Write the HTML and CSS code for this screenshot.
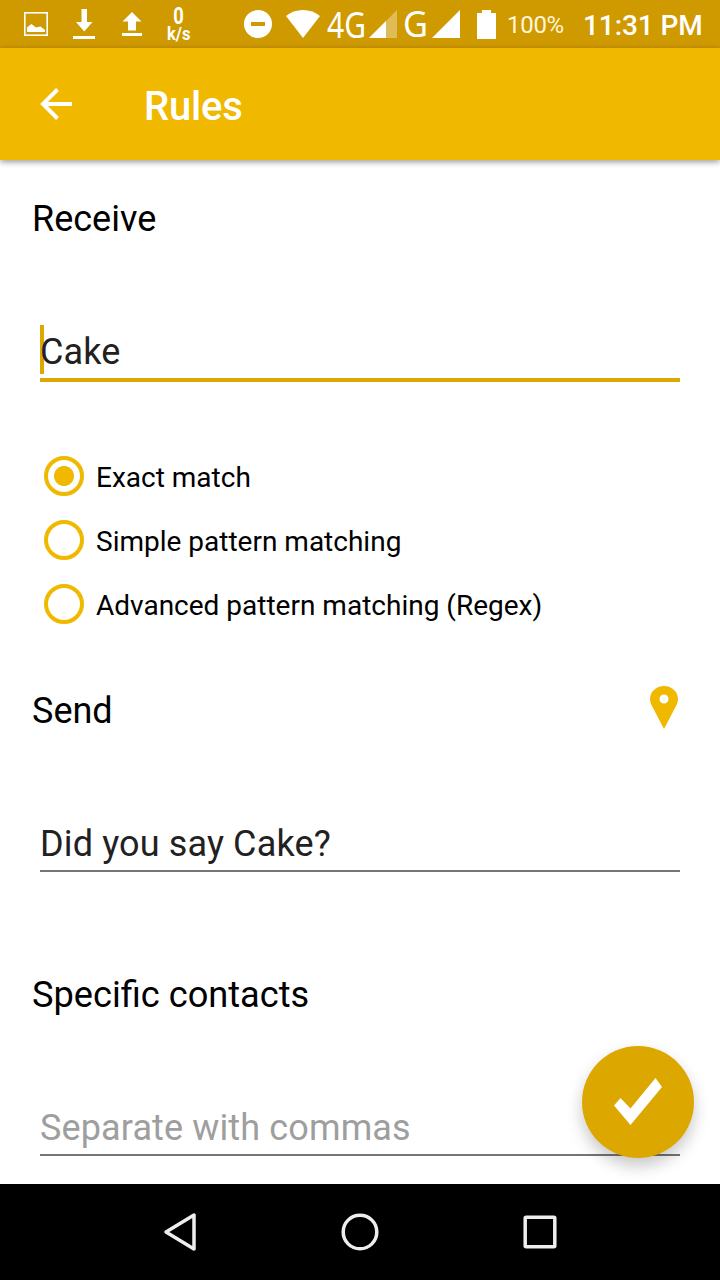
FILE: index.html
```html
<!DOCTYPE html>
<html lang="en">
<head>
    <meta charset="UTF-8">
    <meta name="viewport" content="width=device-width, initial-scale=1.0">
    <title>Rules</title>
    <link rel="stylesheet" href="styles.css">
</head>
<body>
    <div class="screen">
        <div class="status-bar">
            <div class="status-left">
                <svg width="24" height="24" viewBox="0 0 24 24">
                    <rect x="0.8" y="0.8" width="22.4" height="22.4" fill="none" stroke="#fff" stroke-width="1.6"/>
                    <path d="M3 20v-4.500l3-2.500 1.500-1 4.500 3.500 4.500-1 4.500 3.500v2z" fill="#fff"/>
                </svg>
                <svg class="download" width="22" height="30" viewBox="0 0 22 30">
                    <path d="M8.500 0h5.500v13h5.500L11.200 22.500 3 13h5.500zM0 27h22v3H0z" fill="#fff"/>
                </svg>
                <svg class="upload" width="20" height="24" viewBox="0 0 20 24">
                    <path d="M10 0l9.500 9.500H14V18.500H6V9.500H.5zM0 21h20v3H0z" fill="#fff"/>
                </svg>
                <div class="speed">
                    <span class="speed-value">0</span>
                    <span class="speed-unit">k/s</span>
                </div>
            </div>
            <div class="status-right">
                <svg width="28" height="28" viewBox="0 0 28 28">
                    <circle cx="14" cy="14" r="14" fill="#fff"/>
                    <path d="M7 12h14v4H7z" fill="#cf9900"/>
                </svg>
                <svg class="wifi" width="34" height="28" viewBox="0 0 34 28">
                    <path d="M17 28L0 6Q7 0 17 0t17 6z" fill="#fff"/>
                </svg>
                <svg class="network" width="38" height="34" viewBox="0 0 38 34">
                    <text x="0" y="31" textLength="39" lengthAdjust="spacingAndGlyphs">4G</text>
                </svg>
                <svg class="signal" width="28" height="28" viewBox="0 0 28 28">
                    <path d="M0 28L28 0v28z" fill="#fff" fill-opacity="0.35"/>
                    <path d="M0 28l17-17v17z" fill="#fff"/>
                </svg>
                <svg class="network-g" width="24" height="34" viewBox="0 0 24 34">
                    <text x="-2" y="30" textLength="25" lengthAdjust="spacingAndGlyphs">G</text>
                </svg>
                <svg class="signal" width="28" height="28" viewBox="0 0 28 28">
                    <path d="M0 28L28 0v28z" fill="#fff"/>
                </svg>
                <svg class="battery" width="19" height="29" viewBox="0 0 19 29">
                    <path d="M0 3h5V0h9v3h5v26H0z" fill="#fff"/>
                </svg>
                <span class="percent">100%</span>
                <span class="clock">11:31 PM</span>
            </div>
        </div>

        <div class="app-bar">
            <svg width="32" height="32" viewBox="0 0 32 32">
                <path d="M17.500 1.500L3 16l14.500 14.500M3 16h29" fill="none" stroke="#fff" stroke-width="4"/>
            </svg>
            <h1>Rules</h1>
        </div>

        <form class="content">
            <h2>Receive</h2>
            <div class="field focused">
                <input type="text" value="Cake">
                <div class="caret"></div>
            </div>

            <div class="radio-group">
                <label><input type="radio" name="match" checked><span>Exact match</span></label>
                <label><input type="radio" name="match"><span>Simple pattern matching</span></label>
                <label><input type="radio" name="match"><span>Advanced pattern matching (Regex)</span></label>
            </div>

            <div class="section-header">
                <h2>Send</h2>
                <svg width="28" height="44" viewBox="0 0 28 44">
                    <path d="M14 0C6 0 0 6 0 13c0 3 1 5 2 7l12 23 12-23c1-2 2-4 2-7C28 6 22 0 14 0zm0 8.500a4.500 4.500 0 1 1 0 9 4.500 4.500 0 0 1 0-9z" fill="#f0b900"/>
                </svg>
            </div>
            <div class="field">
                <input type="text" value="Did you say Cake?">
            </div>

            <h2 class="contacts">Specific contacts</h2>
            <div class="field">
                <input type="text" placeholder="Separate with commas">
            </div>

            <button type="button" class="fab">
                <svg width="48" height="48" viewBox="0 0 48 48">
                    <path d="M0 27.500l6.500-7.500L16.500 30.500 41.500 0 48 9 16.500 47z" fill="#fff"/>
                </svg>
            </button>
        </form>

        <div class="nav-bar">
            <svg width="38" height="40" viewBox="0 0 38 40">
                <path d="M32 3v34L4 20z" fill="none" stroke="#eee" stroke-width="3.500" stroke-linejoin="round"/>
            </svg>
            <svg width="40" height="40" viewBox="0 0 40 40">
                <circle cx="20" cy="20" r="16.800" fill="none" stroke="#eee" stroke-width="3.500"/>
            </svg>
            <svg width="40" height="40" viewBox="0 0 40 40">
                <rect x="5.200" y="5.200" width="29.600" height="29.600" rx="1" fill="none" stroke="#eee" stroke-width="3.500"/>
            </svg>
        </div>
    </div>
</body>
</html>
```
FILE: styles.css
```css
* {
    box-sizing: border-box;
}

body {
    margin: 0;
    font-family: Roboto, sans-serif;
    background: #fff;
}

svg {
    display: block;
    flex-shrink: 0;
}

.screen {
    display: flex;
    flex-direction: column;
    width: 720px;
    height: 1280px;
    overflow: hidden;
}

/* status bar */
.status-bar {
    display: flex;
    justify-content: space-between;
    height: 48px;
    padding: 0 17px 0 24px;
    background: #cf9900;
    color: #fff;
}

.status-left, .status-right {
    display: flex;
    align-items: center;
}

.download {
    margin: 0 27px 0 25px;
}

.speed {
    display: flex;
    flex-direction: column;
    align-items: center;
    width: 24px;
    margin: 1px 0 0 25px;
    font-weight: 700;
}

.speed-value {
    font-size: 23px;
    line-height: 18px;
    transform: scaleX(0.8);
}

.speed-unit {
    font-size: 18px;
    line-height: 16px;
    transform: scaleX(0.92);
}

.wifi {
    margin-left: 14px;
}

.network {
    margin-left: 7px;
}

.network-g {
    margin-left: 8px;
}

.network, .network-g {
    overflow: visible;
}

.network text, .network-g text {
    font-family: "Noto Sans", sans-serif;
    font-size: 36px;
    fill: #fff;
}

.signal {
    margin-left: 4px;
}

.network-g + .signal {
    margin-left: 3px;
}

.battery {
    margin-left: 17px;
}

.percent {
    width: 56px;
    margin: 2px 0 0 11px;
    font-size: 24px;
    letter-spacing: -0.3px;
    color: #fff6dc;
}

.clock {
    width: 120px;
    margin: 2px 0 0 20px;
    font-size: 28px;
    font-weight: 500;
    letter-spacing: -0.1px;
    white-space: nowrap;
}

/* app bar */
.app-bar {
    display: flex;
    align-items: center;
    gap: 72px;
    height: 112px;
    padding-left: 40px;
    background: #f0b900;
    box-shadow: 0 2px 6px rgba(0,0,0,0.4);
    z-index: 1;
}

.app-bar h1 {
    margin: 4px 0 0;
    font-size: 40px;
    font-weight: 500;
    letter-spacing: -0.2px;
    color: #fff;
}

/* form */
.content {
    position: relative;
    height: 1024px;
    padding: 38px 40px 0 32px;
}

h2 {
    margin: 0;
    font-size: 36px;
    font-weight: 400;
    line-height: 42px;
    color: #000;
}

.field {
    position: relative;
    height: 55px;
    margin: 85px 0 0 8px;
    padding-top: 6px;
    border-bottom: 2px solid #757575;
}

.field input {
    display: block;
    width: 100%;
    height: 42px;
    padding: 0;
    border: none;
    outline: none;
    background: none;
    font-family: inherit;
    font-size: 36px;
    letter-spacing: 0.13px;
    color: #212121;
}

.field input::placeholder {
    color: #9e9e9e;
}

.focused {
    height: 57px;
    border-bottom: 4px solid #dca800;
}

.caret {
    position: absolute;
    left: 0;
    top: 0;
    width: 4px;
    height: 49px;
    background: #dca800;
    z-index: -1;
}

.radio-group {
    margin-top: 62px;
}

.radio-group label {
    display: flex;
    align-items: center;
    gap: 12px;
    height: 64px;
    padding-left: 12px;
    font-size: 28px;
    line-height: 30px;
}

.radio-group span {
    padding-top: 4px;
}

.radio-group input {
    appearance: none;
    width: 40px;
    height: 40px;
    margin: 0;
    border: 4px solid #f0b900;
    border-radius: 50%;
}

.radio-group input:checked {
    background: radial-gradient(circle, #f0b900 9.5px, transparent 10.5px);
}

.section-header {
    display: flex;
    justify-content: space-between;
    align-items: center;
    height: 42px;
    margin-top: 54px;
    padding-right: 2px;
}

.section-header svg {
    margin-top: -6px;
}

.contacts {
    margin-top: 102px;
    font-size: 36.2px;
}

.fab {
    position: absolute;
    right: 26px;
    bottom: 26px;
    display: flex;
    align-items: center;
    justify-content: center;
    width: 112px;
    height: 112px;
    padding: 0;
    border: none;
    border-radius: 50%;
    background: #dca800;
    box-shadow: 0 8px 16px rgba(0,0,0,0.22);
}

/* navigation bar */
.nav-bar {
    display: flex;
    justify-content: space-between;
    align-items: center;
    height: 96px;
    padding: 0 160px 0 162px;
    background: #000;
    z-index: 1;
}
```
